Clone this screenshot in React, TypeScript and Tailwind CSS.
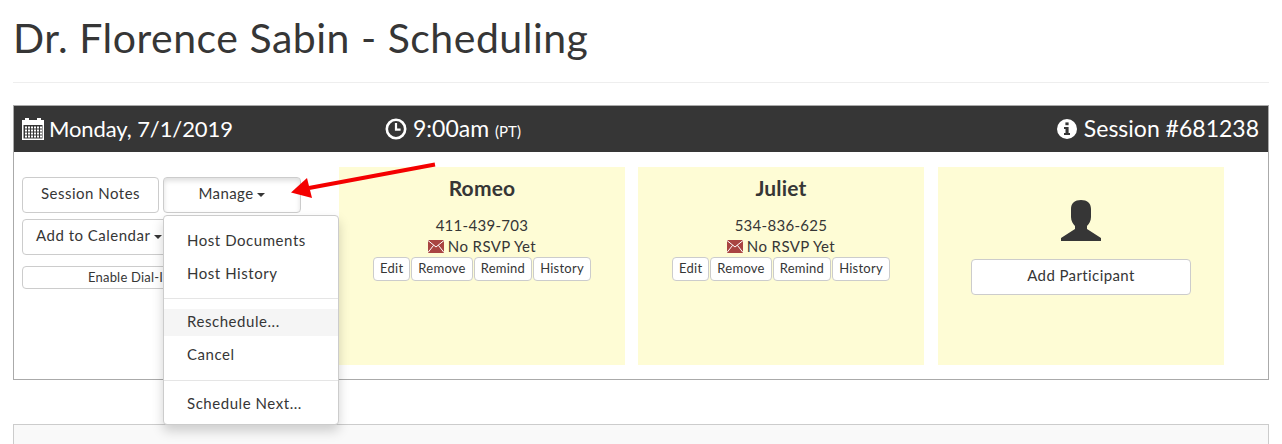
import type { ReactNode } from "react";

const FONT = "font-['Lato','Noto_Sans',sans-serif]";

function CalendarIcon() {
  return (
    <svg width="22" height="23" viewBox="0 0 22 23" className="shrink-0">
      <path fill="#fff" fillRule="evenodd" d="M0 3h3V1h4v2h8V1h4v2h3v20H0z M1.5 8v13.5h19V8z" />
      <g fill="#fff">
        {[9.5, 12.5, 15.5, 18.5].map((y) =>
          [3, 6, 9, 12, 15, 18].map((x) => <rect key={`${x}-${y}`} x={x} y={y} width="2" height="2" />)
        )}
      </g>
    </svg>
  );
}

function ClockIcon() {
  return (
    <svg width="22" height="22" viewBox="0 0 22 22" className="shrink-0">
      <circle cx="11" cy="11" r="9.2" fill="none" stroke="#fff" strokeWidth="2.6" />
      <path d="M11 5v6.6h4.6" fill="none" stroke="#fff" strokeWidth="2.2" />
    </svg>
  );
}

function InfoIcon() {
  return (
    <svg width="20" height="20" viewBox="0 0 20 20" className="shrink-0">
      <circle cx="10" cy="10" r="10" fill="#fff" />
      <rect x="8.4" y="3.4" width="3.2" height="2.8" fill="#363636" />
      <path d="M7 8h4.6v6H13v2H7v-2h1.5v-4H7z" fill="#363636" />
    </svg>
  );
}

function MailIcon() {
  return (
    <svg width="16" height="13" viewBox="0 0 16 13" className="shrink-0">
      <rect width="16" height="13" fill="#a94442" />
      <path d="M0 .5l8 6.5 8-6.5M0 12.5l5.6-7.2M16 12.5l-5.6-7.2" fill="none" stroke="#fff" strokeWidth="1" />
    </svg>
  );
}

function PersonIcon() {
  return (
    <svg width="40" height="41" viewBox="0 0 40 41">
      <path
        fill="#363636"
        d="M20 0c6 0 10 3 10 9v8c0 4-2 7-4 9v3l14 9v3H0v-3l14-9v-3c-2-2-4-5-4-9V9c0-6 4-9 10-9z"
      />
    </svg>
  );
}

function Caret() {
  return <span className="ml-1 inline-block align-middle border-x-4 border-t-4 border-x-transparent border-t-[#363636]" />;
}

function Btn({ className, children }: { className: string; children: ReactNode }) {
  return (
    <button className={`bg-white border border-[#ccc] rounded text-[#363636] whitespace-nowrap ${className}`}>
      {children}
    </button>
  );
}

function Participant({ name, phone }: { name: string; phone: string }) {
  return (
    <div className="w-[286px] h-[198px] bg-[#fefcd5] flex flex-col items-center pt-[8px] text-[#363636]">
      <div className="text-[21px] leading-[26px] font-bold tracking-[0.2px]">{name}</div>
      <div className="mt-[14px] text-[15px] leading-[21px] tracking-[0.3px]">{phone}</div>
      <div className="flex items-center gap-1 text-[15px] leading-[21px] tracking-[0.4px]">
        <MailIcon />
        No RSVP Yet
      </div>
      <div className="flex gap-px">
        {["Edit", "Remove", "Remind", "History"].map((label) => (
          <Btn key={label} className="h-6 px-[6px] text-[13px] tracking-[0.25px]">
            {label}
          </Btn>
        ))}
      </div>
    </div>
  );
}

export default function App() {
  return (
    <div className={`relative w-[1282px] h-[444px] overflow-hidden bg-white ${FONT}`}>
      <div className="px-[13px]">
        <h1 className="pt-[13px] h-[82px] text-[41px] leading-[50px] tracking-[0.5px] text-[#363636]">
          Dr. Florence Sabin - Scheduling
        </h1>
        <hr className="border-[#eee]" />

        <div className="mt-[22px] h-[275px] border border-[#aaa]">
          <div className="h-[46px] bg-[#363636] text-white flex items-center pl-[8px] pr-[9px] text-[23px] pb-px">
            <div className="w-[363px] flex items-center gap-[5px]">
              <CalendarIcon />
              <span className="text-[22px] tracking-[-0.1px]">Monday, 7/1/2019</span>
            </div>
            <div className="flex items-center gap-[6px]">
              <ClockIcon />
              <span>
                9:00am <span className="text-[15px]">(PT)</span>
              </span>
            </div>
            <div className="ml-auto flex items-center gap-[7px]">
              <InfoIcon />
              Session #681238
            </div>
          </div>

          <div className="flex pl-[8px] pt-[15px]">
            <div className="w-[317px] shrink-0 pt-[10px] text-[15px]">
              <div className="flex gap-1">
                <Btn className="w-[137px] h-9 pb-[3px] tracking-[0.5px]">Session Notes</Btn>
                <Btn className="w-[138px] h-9 pb-[3px] tracking-[0.4px] shadow-[inset_0_3px_5px_rgba(0,0,0,0.125)]">
                  Manage
                  <Caret />
                </Btn>
              </div>
              <Btn className="block w-[150px] h-9 mt-[6px] pb-[3px] tracking-[0.5px] text-left pl-[13px]">
                Add to Calendar
                <Caret />
              </Btn>
              <Btn className="block w-[279px] h-[23px] mt-[11px] text-[13px] text-left pl-[65px] tracking-[0.2px]">
                Enable Dial-In Numbers
              </Btn>
            </div>
            <div className="flex gap-[13px]">
              <Participant name="Romeo" phone="411-439-703" />
              <Participant name="Juliet" phone="534-836-625" />
              <div className="ml-px w-[286px] h-[198px] bg-[#fefcd5] flex flex-col items-center pt-[33px]">
                <PersonIcon />
                <Btn className="w-[220px] h-9 mt-[18px] pb-[3px] text-[15px] tracking-[0.4px]">Add Participant</Btn>
              </div>
            </div>
          </div>
        </div>

        <div className="mt-[44px] h-[40px] bg-[#f9f9f9] border border-[#ccc]" />
      </div>

      {/* open dropdown menu */}
      <div className="absolute left-[163px] top-[215px] w-[176px] h-[210px] bg-white border border-[#ccc] rounded shadow-[0_6px_12px_rgba(0,0,0,0.175)] text-[15px] text-[#363636] tracking-[0.55px] pt-[8px]">
        <div className="h-[33px] leading-[33px] pl-[23px]">Host Documents</div>
        <div className="h-[33px] leading-[33px] pl-[23px]">Host History</div>
        <div className="h-px bg-[#e5e5e5] mt-[8px] mb-[10px]" />
        <div className="h-[27px] leading-[25px] pl-[23px] bg-[#f5f5f5]">Reschedule...</div>
        <div className="h-[38px] leading-[36px] pl-[23px]">Cancel</div>
        <div className="h-px bg-[#e5e5e5] mt-[6px] mb-[6px]" />
        <div className="h-[33px] leading-[33px] pl-[23px]">Schedule Next...</div>
      </div>

      {/* annotation arrow */}
      <svg className="absolute left-[285px] top-[158px]" width="155" height="46" viewBox="0 0 155 46">
        <path d="M150 6.5L24 30" stroke="#f40000" strokeWidth="4" fill="none" />
        <path d="M6 34.5L22 20l5 20z" fill="#f40000" />
      </svg>
    </div>
  );
}
